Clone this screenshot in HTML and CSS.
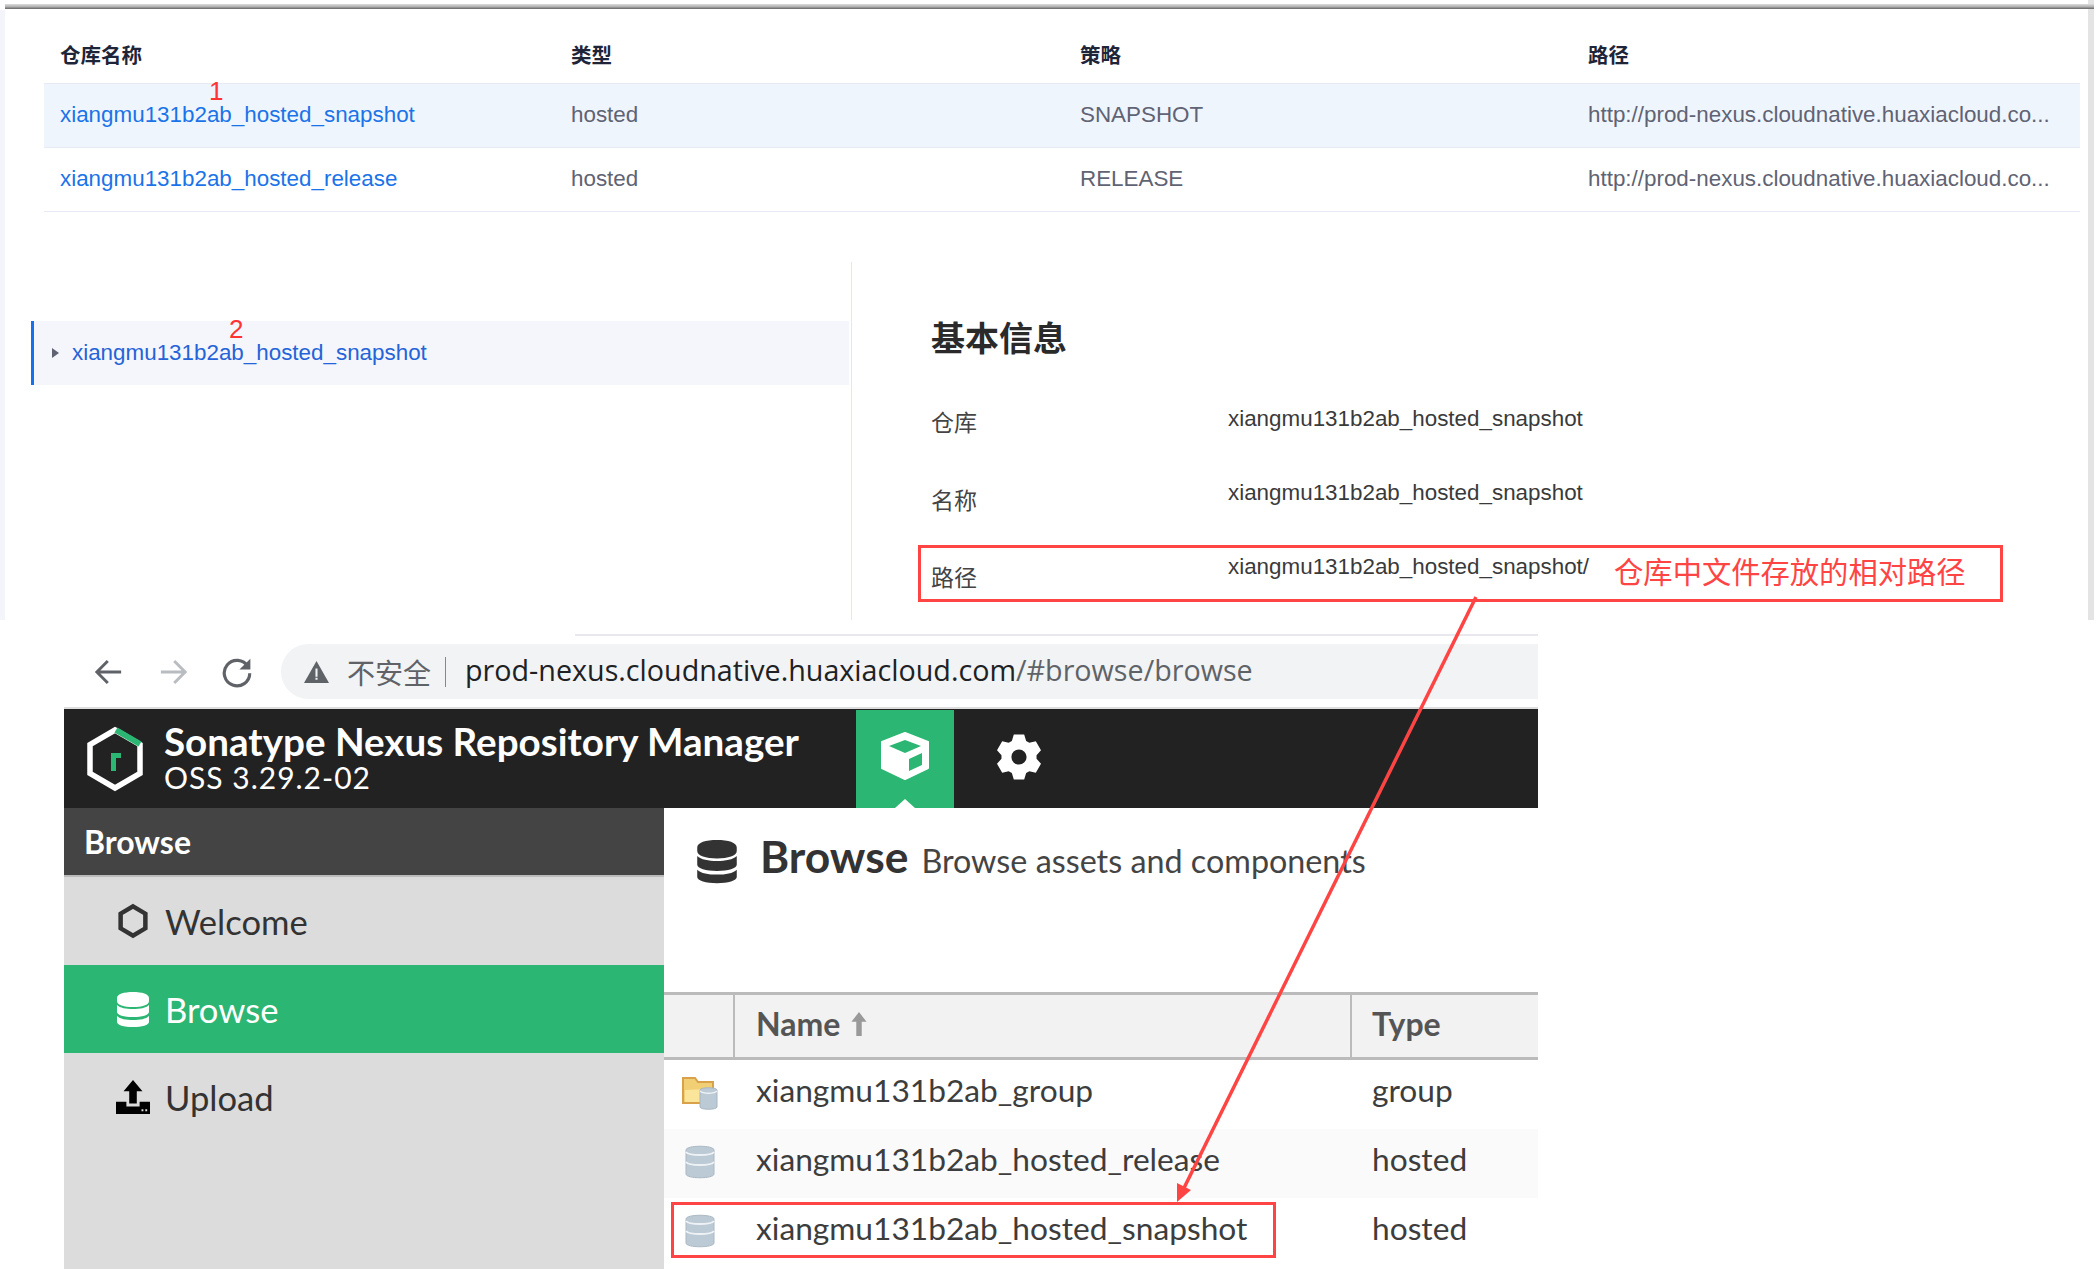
FILE: index.html
```html
<!doctype html>
<html>
<head>
<meta charset="utf-8">
<title>仓库路径</title>
<link rel="stylesheet" href="styles.css">
</head>

<body>
<div class="page">

	<div class="console">
		<div class="repo-table">
			<div class="repo-head">
				<div>仓库名称</div>
				<div>类型</div>
				<div>策略</div>
				<div>路径</div>
			</div>
			<div class="repo-row hover">
				<div><a href="javascript:;">xiangmu131b2ab_hosted_snapshot</a></div>
				<div>hosted</div>
				<div>SNAPSHOT</div>
				<div>http://prod-nexus.cloudnative.huaxiacloud.co...</div>
			</div>
			<div class="repo-row">
				<div><a href="javascript:;">xiangmu131b2ab_hosted_release</a></div>
				<div>hosted</div>
				<div>RELEASE</div>
				<div>http://prod-nexus.cloudnative.huaxiacloud.co...</div>
			</div>
		</div>

		<div class="detail">
			<div class="tree">
				<div class="tree-item">
					<span class="caret"></span>
					<a href="javascript:;">xiangmu131b2ab_hosted_snapshot</a>
				</div>
			</div>
			<div class="info">
				<h2>基本信息</h2>
				<div class="info-body">
					<div class="info-keys">
						<div>仓库</div>
						<div>名称</div>
						<div>路径</div>
					</div>
					<div class="info-vals">
						<div>xiangmu131b2ab_hosted_snapshot</div>
						<div>xiangmu131b2ab_hosted_snapshot</div>
						<div class="val-note">xiangmu131b2ab_hosted_snapshot/<span class="note">仓库中文件存放的相对路径</span></div>
					</div>
				</div>
			</div>
		</div>
	</div>

	<div class="shot">
		<div class="toolbar">
			<svg class="nav-icon" viewBox="0 0 28 28"><path d="M24 14H5M13 5l-9 9 9 9" fill="none" stroke="#5f6368" stroke-width="2.4"/></svg>
			<svg class="nav-icon" viewBox="0 0 28 28"><path d="M4 14h19M15 5l9 9-9 9" fill="none" stroke="#b9bcc0" stroke-width="2.4"/></svg>
			<svg class="nav-icon" viewBox="0 0 28 28"><path d="M23 9.500A10.500 10.500 0 1 0 24.500 15" fill="none" stroke="#5f6368" stroke-width="2.6"/><path d="M25 3v9h-9z" fill="#5f6368"/></svg>
			<div class="omnibox">
				<svg class="warn" viewBox="0 0 24 22"><path d="M12 1L24 22H0z" fill="#5f6368"/><path d="M11 8h2v8h-2zM11 17h2v2h-2z" fill="#f1f3f4"/></svg>
				<span class="insecure">不安全</span>
				<span class="sep"></span>
				<span class="url">prod-nexus.cloudnative.huaxiacloud.com<span class="url-rest">/#browse/browse</span></span>
			</div>
		</div>

		<div class="nexus">
			<div class="nx-head">
				<div class="brand">
					<svg class="logo" viewBox="0 0 60 66">
						<path d="M30 4L55 18.500V47.500L30 62L5 47.500V18.500Z" fill="none" stroke="#fff" stroke-width="5.500"/>
						<path d="M31 4L55 18" fill="none" stroke="#2bb673" stroke-width="6"/>
						<path d="M26 45V27h10v5h-5v13z" fill="#2bb673"/>
					</svg>
					<div>
						<div class="brand-name">Sonatype Nexus Repository Manager</div>
						<div class="brand-ver">OSS 3.29.2-02</div>
					</div>
				</div>
				<div class="mode active">
					<svg width="50" height="50" viewBox="0 0 50 50">
						<path d="M25 1L48 10V36L25 47L2 36V10Z" fill="#fff" stroke="#fff" stroke-width="2" stroke-linejoin="round"/>
						<path d="M25 8L41 14L25 21L9 14Z" fill="#2bb673"/>
						<path d="M29 27L42 21V33L29 39Z" fill="#2bb673"/>
					</svg>
				</div>
				<div class="mode">
					<svg width="48" height="48" viewBox="0 0 24 24"><path fill="#fff" fill-rule="evenodd" d="M8.420 3.960L9.410.8h5.180l.99 3.160 1.590.92 3.240-.72 2.590 4.480-2.240 2.440v1.840l2.240 2.440-2.590 4.480-3.240-.72-1.590.92-.99 3.160H9.410l-.99-3.160-1.590-.92-3.240.72-2.590-4.480 2.240-2.440v-1.840L1.010 8.640l2.580-4.480 3.240.72zM12 8.200a3.800 3.800 0 1 0 0 7.600 3.800 3.800 0 0 0 0-7.600z"/></svg>
				</div>
			</div>

			<div class="nx-body">
				<div class="side">
					<div class="side-title">Browse</div>
					<div class="side-item">
						<svg class="side-icon" viewBox="0 0 30 32"><path d="M15 3L26 9.500V22.500L15 29L4 22.500V9.500Z" fill="none" stroke="#333" stroke-width="4"/></svg>
						Welcome
					</div>
					<div class="side-item on">
						<svg class="side-icon" viewBox="0 0 34 36"><path fill="#fff" d="M17 1c9 0 16 2 16 6v3c0 4-7 6-16 6S1 14 1 10V7c0-4 7-6 16-6zM1 14c3 3 9 4 16 4s13-1 16-4v7c0 3-7 5-16 5S1 24 1 21zM1 25c3 3 9 4 16 4s13-1 16-4v6c0 3-7 5-16 5S1 34 1 31z"/></svg>
						Browse
					</div>
					<div class="side-item">
						<svg class="side-icon" viewBox="0 0 36 36"><path d="M18 0l10 12h-6v13h-8V12H8z" fill="#000"/><path d="M0 23h11v5h14v-5h11v13H0z" fill="#000"/><path d="M27 31h2v2h-2zM31 31h2v2h-2z" fill="#ddd"/></svg>
						Upload
					</div>
				</div>
				<div class="main">
					<div class="main-head">
						<svg class="main-icon" viewBox="0 0 34 36"><path fill="#333" d="M17 1c9 0 16 2 16 6v3c0 4-7 6-16 6S1 14 1 10V7c0-4 7-6 16-6zM1 14c3 3 9 4 16 4s13-1 16-4v7c0 3-7 5-16 5S1 24 1 21zM1 25c3 3 9 4 16 4s13-1 16-4v6c0 3-7 5-16 5S1 34 1 31z"/></svg>
						<span class="main-title">Browse</span>
						<span class="main-sub">Browse assets and components</span>
					</div>
					<div class="grid">
						<div class="grid-head">
							<div class="c-icon"></div>
							<div class="c-name">Name <svg width="20" height="26" viewBox="0 0 16 24"><path d="M8 1l7 9h-4.500v13h-5V10H1z" fill="#999"/></svg></div>
							<div class="c-type">Type</div>
						</div>
						<div class="grid-row">
							<div class="c-icon">
								<svg class="repo-icon" viewBox="0 0 36 34">
									<path d="M1 2h12l3 4h15v21H1z" fill="#f0cf75" stroke="#d9a24a" stroke-width="2"/>
									<path d="M3 14l24-1v13H3z" fill="#fbe59a"/>
									<path d="M18 14c0-3 17-3 17 0v17c0 3-17 3-17 0z" fill="#bccad5" stroke="#a8b6c1" stroke-width="1"/>
									<path d="M18 15c3 3 14 3 17 0" fill="none" stroke="#eef2f5" stroke-width="1.500"/>
								</svg>
							</div>
							<div class="c-name">xiangmu131b2ab_group</div>
							<div class="c-type">group</div>
						</div>
						<div class="grid-row alt">
							<div class="c-icon">
								<svg class="repo-icon" viewBox="0 0 36 34">
									<path d="M4 5c0-5 28-5 28 0v24c0 5-28 5-28 0z" fill="#bccad5" stroke="#aab8c3" stroke-width="1"/>
									<path d="M4 7c3 4 25 4 28 0M4 17c3 4 25 4 28 0" fill="none" stroke="#eef2f5" stroke-width="2"/>
								</svg>
							</div>
							<div class="c-name">xiangmu131b2ab_hosted_release</div>
							<div class="c-type">hosted</div>
						</div>
						<div class="grid-row">
							<div class="c-icon">
								<svg class="repo-icon" viewBox="0 0 36 34">
									<path d="M4 5c0-5 28-5 28 0v24c0 5-28 5-28 0z" fill="#bccad5" stroke="#aab8c3" stroke-width="1"/>
									<path d="M4 7c3 4 25 4 28 0M4 17c3 4 25 4 28 0" fill="none" stroke="#eef2f5" stroke-width="2"/>
								</svg>
							</div>
							<div class="c-name">xiangmu131b2ab_hosted_snapshot</div>
							<div class="c-type">hosted</div>
						</div>
					</div>
				</div>
			</div>
		</div>
	</div>

	<span class="mark mark-1">1</span>
	<span class="mark mark-2">2</span>
	<div class="redbox box-path"></div>
	<div class="redbox box-repo"></div>
	<svg class="arrow" width="2098" height="1269" viewBox="0 0 2098 1269">
		<path d="M1476 597L1183 1190" fill="none" stroke="#f44" stroke-width="3.500"/>
		<path d="M1177 1202L1177 1183 1191 1190Z" fill="#f44"/>
	</svg>
</div>
</body>
</html>
```

FILE: styles.css
```css
*{margin:0; padding:0; box-sizing:border-box; list-style:none; text-decoration:none;}
html,body{background:#fff;}
.page{width:2098px; height:1269px; position:relative; overflow:hidden; font-family:"Liberation Sans","Noto Sans CJK SC",sans-serif;}

/* upper picture: console */
.console{height:620px; margin-right:4px; padding:9px 6px 0 5px; border-right:6px solid #999; border-image:linear-gradient(90deg,#bbb,#888,#aaa,#e4e4e4) 1; position:relative;}
.console:before{content:""; position:absolute; left:0; top:10px; bottom:0; width:5px; background:#f3f5fb;}
.console:after{content:""; position:absolute; left:5px; right:-6px; top:4px; height:5px; background:linear-gradient(180deg,#ddd,#b5b5b5,#666);}
.repo-table{margin:18px 0 0 39px; width:2036px; font-size:22.400px;}
.repo-head,.repo-row{display:grid; grid-template-columns:511px 509px 508px 508px; align-items:center;}
.repo-head>div,.repo-row>div{padding:0 0 2px 16px; white-space:nowrap;}
.repo-head{height:56px; font-size:20.500px; font-weight:bold; color:#1e2538;}
.repo-row{height:64px; color:#5f6373; border-top:1px solid #e7eaf2;}
.repo-row:last-child{height:65px; border-bottom:1px solid #e7eaf2;}
.repo-row.hover{background:#eff5fd;}
.repo-row a{color:#1a73e8;}

.detail{display:flex; margin-top:50px; height:358px;}
.tree{width:847px; padding:59px 0 0 26px; border-right:1px solid #e5e7ec;}
.tree-item{height:64px; margin-right:2px; background:#f4f6fb; border-left:3px solid #1672ec; display:flex; align-items:center; padding-left:18px; font-size:22.400px;}
.tree-item a{color:#2563d8; margin-left:13px;}
.caret{width:0; height:0; border-left:7px solid #5f6373; border-top:5px solid transparent; border-bottom:5px solid transparent;}
.info{flex:1; padding:55px 0 0 79px; color:#333;}
.info h2{font-size:34px; line-height:44px; color:#2a2a2a; margin-bottom:21px;}
.info-body{display:flex;}
.info-keys{width:297px; padding-top:3px; font-size:23px; line-height:77.500px; color:#444;}
.info-vals{font-size:22.400px; line-height:74px; color:#3a3a3a; white-space:nowrap;}
.val-note{display:flex; align-items:center;}
.note{color:#f44; font-size:29.300px; line-height:34px; margin:12px 0 0 25px;}

/* lower picture: browser with nexus */
.shot{margin-left:64px; width:1474px; height:649px;}
.toolbar{height:73px; display:flex; align-items:center; padding:0 0 0 12px; border-top:2px solid #e8e8ee; margin-top:14px; border-image:linear-gradient(90deg,#fff 511px,#e8e8ee 511px) 1; background:#fff;}
.nav-icon{width:34px; height:34px; margin:0 14px 0 16px;}
.omnibox{flex:1; height:55px; margin-left:13px; border-radius:28px 0 0 28px; background:#f1f3f4; display:flex; align-items:center; padding-left:23px;}
.warn{width:25px; height:23px;}
.insecure{font-size:28px; color:#5f6368; margin-left:18px;}
.sep{width:1px; height:30px; background:#888; margin:0 19px 0 14px;}
.url{font-size:28.700px; color:#202124; font-family:"Open Sans",sans-serif; margin-bottom:4px;}
.url-rest{color:#5f6368;}

.nexus{font-family:Lato,"Open Sans",sans-serif;}
.nx-head{height:101px; background:#222; border-top:2px solid #ddd; display:flex;}
.brand{width:792px; display:flex; align-items:center; padding-left:21px; color:#fff;}
.logo{width:60px; height:66px; margin-right:19px;}
.brand-name{font-size:38.600px; font-weight:bold; line-height:42px; margin-top:-4px;}
.brand-ver{font-size:30px; line-height:31px; letter-spacing:1px;}
.mode{width:130px; height:98px; margin-top:1px; display:flex; align-items:center; justify-content:center;}
.mode.active{width:98px; background:#2bb673; position:relative;}
.mode.active:after{content:""; position:absolute; left:39px; bottom:0; border-left:10px solid transparent; border-right:10px solid transparent; border-bottom:9px solid #fff;}
.mode svg{margin-bottom:4px;}
.nx-body{display:flex; height:461px;}
.side{width:600px; background:#dcdcdc; font-size:34.600px; color:#333;}
.side-title{height:69px; background:#444; border-bottom:2px solid #bbb; color:#fff; font-size:32px; font-weight:bold; line-height:67px; padding-left:20px;}
.side-item{height:88px; display:flex; align-items:center; padding-left:52px;}
.side-item.on{background:#2bb673; color:#fff;}
.side-icon{width:34px; height:36px; margin-right:15px;}
.main{flex:1; background:#fff; color:#333;}
.main-head{height:184px; padding:23px 0 0 32px; display:flex; align-items:flex-start;}
.main-icon{width:42px; height:46px; margin-right:22px; margin-top:7px;}
.main-title{font-size:44.400px; font-weight:bold; line-height:50px; margin-right:13px;}
.main-sub{font-size:32.300px; line-height:60px; color:#444;}
.grid-head,.grid-row{display:grid; grid-template-columns:71px 617px 1fr; align-items:center;}
.grid-head{height:68px; background:#f2f2f2; border-top:3px solid #bbb; border-bottom:3px solid #bbb; font-size:32px; font-weight:bold; color:#555;}
.grid-head>div{height:100%; display:flex; align-items:center; gap:9px; padding-bottom:5px;}
.grid-head .c-icon,.grid-head .c-name{border-right:2px solid #bbb;}
.grid-row{height:69px; font-size:31.700px; color:#3d3d3d;}
.grid-row.alt{background:#fafafa;}
.grid-row .c-name,.grid-row .c-type{padding-bottom:9px;}
.grid-row .c-icon{padding-bottom:4px;}
.c-name,.c-type{padding-left:21px;}
.c-type{margin-left:-1px;}
.c-icon{padding-left:18px;}
.repo-icon{width:36px; height:34px; display:block; filter:blur(.5px);}

/* annotations over the pictures */
.mark{position:absolute; color:#f33; font-size:26px; line-height:26px; font-family:"Liberation Sans",sans-serif;}
.mark-1{left:209px; top:78px;}
.mark-2{left:229px; top:316px;}
.redbox{position:absolute; border:3px solid #f44;}
.box-path{left:918px; top:545px; width:1085px; height:57px;}
.box-repo{left:671px; top:1202px; width:605px; height:56px;}
.arrow{position:absolute; left:0; top:0;}
```
